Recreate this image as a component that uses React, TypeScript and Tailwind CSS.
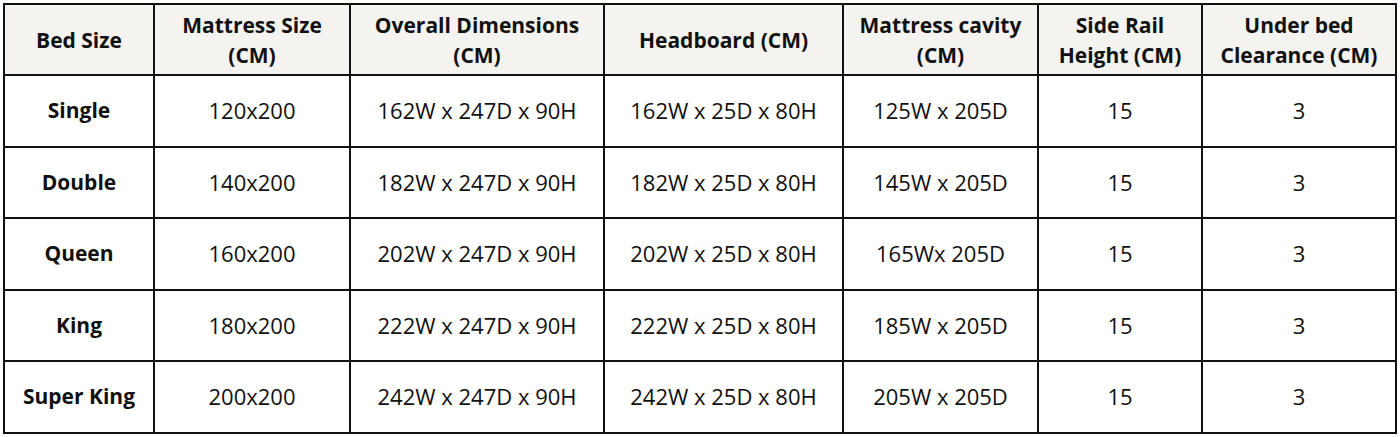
import React from "react";

const headers = [
  ["Bed Size"],
  ["Mattress Size", "(CM)"],
  ["Overall Dimensions", "(CM)"],
  ["Headboard (CM)"],
  ["Mattress cavity", "(CM)"],
  ["Side Rail", "Height (CM)"],
  ["Under bed", "Clearance (CM)"],
];

const widths = ["w-[150px]", "w-[196px]", "w-[254px]", "w-[239px]", "w-[195px]", "w-[164px]", "w-[194px]"];

const rows = [
  ["Single", "120x200", "162W x 247D x 90H", "162W x 25D x 80H", "125W x 205D", "15", "3"],
  ["Double", "140x200", "182W x 247D x 90H", "182W x 25D x 80H", "145W x 205D", "15", "3"],
  ["Queen", "160x200", "202W x 247D x 90H", "202W x 25D x 80H", "165Wx 205D", "15", "3"],
  ["King", "180x200", "222W x 247D x 90H", "222W x 25D x 80H", "185W x 205D", "15", "3"],
  ["Super King", "200x200", "242W x 247D x 90H", "242W x 25D x 80H", "205W x 205D", "15", "3"],
];

export default function App() {
  return (
    <div className="w-[1400px] h-[437px] bg-white pt-[3px] pl-[3px] font-['Open_Sans',sans-serif] text-[#111]">
      <table className="border-collapse table-fixed w-[1392px] border-[2.5px] border-[#111]">
        <thead>
          <tr className="h-[71px] bg-[#f4f3f0]">
            {headers.map((h, i) => (
              <th
                key={i}
                className={`${widths[i]} border-[2.5px] border-[#111] text-center align-middle font-bold text-[21px] leading-[30px]`}
              >
                {h.map((line, j) => (
                  <div key={j}>{line}</div>
                ))}
              </th>
            ))}
          </tr>
        </thead>
        <tbody>
          {rows.map((r, i) => (
            <tr key={i} className="h-[71.5px]">
              {r.map((cell, j) => (
                <td
                  key={j}
                  className={`border-[2.5px] border-[#111] text-center align-middle ${
                    j === 0 ? "font-bold text-[21px]" : "font-normal text-[22px]"
                  }`}
                >
                  {cell}
                </td>
              ))}
            </tr>
          ))}
        </tbody>
      </table>
    </div>
  );
}
